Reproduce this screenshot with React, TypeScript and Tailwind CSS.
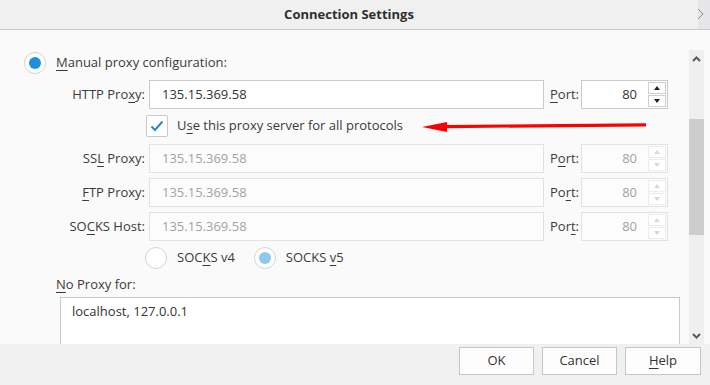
import React from 'react';

const U = ({ children }: { children: React.ReactNode }) => (
  <span className="underline decoration-1 underline-offset-[3px]">{children}</span>
);

function Radio({ checked, disabled }: { checked?: boolean; disabled?: boolean }) {
  return (
    <div className="w-[22px] h-[22px] rounded-full border border-[#d4d4d4] bg-white flex items-center justify-center shrink-0">
      {checked && (
        <div className={`w-[12px] h-[12px] rounded-full ${disabled ? 'bg-[#8ec8ec]' : 'bg-[#1f8fdc]'}`} />
      )}
    </div>
  );
}

function Spinner({ disabled }: { disabled?: boolean }) {
  const border = disabled ? 'border-[#ececec]' : 'border-[#cfcfcf]';
  const fill = disabled ? '#d8d8d8' : '#222';
  return (
    <div className="flex flex-col gap-[1px] py-[1px] pr-[1px]">
      <div className={`w-[18px] h-[12px] border ${border} bg-white flex items-center justify-center`}>
        <svg width="6" height="4" viewBox="0 0 6 4">
          <polygon points="3,0 6,4 0,4" fill={fill} />
        </svg>
      </div>
      <div className={`w-[18px] h-[12px] border ${border} bg-white flex items-center justify-center`}>
        <svg width="6" height="4" viewBox="0 0 6 4">
          <polygon points="0,0 6,0 3,4" fill={fill} />
        </svg>
      </div>
    </div>
  );
}

function ProxyRow({
  label,
  port,
  disabled,
}: {
  label: React.ReactNode;
  port: React.ReactNode;
  disabled?: boolean;
}) {
  const border = disabled ? 'border-[#e2e2e2]' : 'border-[#c9c9c9]';
  const text = disabled ? 'text-[#a3a3a3]' : 'text-[#333]';
  const bg = disabled ? 'bg-[#fcfcfc]' : 'bg-white';
  return (
    <div className="flex items-center h-[29px]">
      <div className="w-[121px] text-right">{label}</div>
      <div className={`ml-[4px] w-[395px] h-full border ${border} ${bg} ${text} pl-[12px] flex items-center`}>
        135.15.369.58
      </div>
      <div className="ml-[6px] w-[31px]">{port}</div>
      <div className={`w-[87px] h-full border ${border} ${bg} ${text} flex items-center justify-end`}>
        <span className="mr-[11px]">80</span>
        <Spinner disabled={disabled} />
      </div>
    </div>
  );
}

export default function App() {
  return (
    <div className="w-[710px] h-[385px] flex flex-col bg-[#fafafa] font-['Open_Sans',sans-serif] text-[13px] text-[#3a3a3a] overflow-hidden">
      <div className="h-[30px] shrink-0 flex bg-[#f0f0f0] border-b border-[#c9c9c9]">
        <div className="flex-1 flex items-center justify-center font-bold text-[#2f2f2f]">Connection Settings</div>
        <div className="w-[12px] bg-[#e6e6ea] flex items-center">
          <svg width="12" height="30" viewBox="0 0 12 30">
            <path d="M0 9 L5 14 M5 14 L0 19" stroke="#8a8a8a" strokeWidth="1" fill="none" />
          </svg>
        </div>
      </div>

      <div className="flex-1 flex min-h-0">
        <div className="flex-1 relative overflow-hidden pl-[24px] pt-[22px]">
          <div className="flex items-center h-[22px]">
            <Radio checked />
            <span className="ml-[10px]">
              <U>M</U>anual proxy configuration:
            </span>
          </div>

          <div className="mt-[6px]">
            <ProxyRow
              label={<>HTTP Pro<U>x</U>y:</>}
              port={<><U>P</U>ort:</>}
            />
          </div>

          <div className="mt-[6px] flex items-center h-[22px] ml-[122px]">
            <div className="w-[22px] h-[22px] border border-[#c9c9c9] bg-white rounded-[2px] flex items-center justify-center">
              <svg width="14" height="12" viewBox="0 0 14 12">
                <path d="M1.5 6.5 L5 10 L12.5 1.5" fill="none" stroke="#2a88d2" strokeWidth="2" />
              </svg>
            </div>
            <span className="ml-[9px]">
              U<U>s</U>e this proxy server for all protocols
            </span>
          </div>

          <div className="mt-[7px] flex flex-col gap-[5px]">
            <ProxyRow disabled label={<>SS<U>L</U> Proxy:</>} port={<>P<U>o</U>rt:</>} />
            <ProxyRow disabled label={<><U>F</U>TP Proxy:</>} port={<>Po<U>r</U>t:</>} />
            <ProxyRow disabled label={<>SO<U>C</U>KS Host:</>} port={<>Por<U>t</U>:</>} />
          </div>

          <div className="mt-[5px] flex items-center h-[23px] ml-[121px]">
            <Radio />
            <span className="ml-[10px]">
              SOC<U>K</U>S v4
            </span>
            <div className="ml-[19px]">
              <Radio checked disabled />
            </div>
            <span className="ml-[10px]">
              SOCKS <U>v</U>5
            </span>
          </div>

          <div className="mt-[6px] ml-[32px] h-[18px] leading-[18px]">
            <U>N</U>o Proxy for:
          </div>
          <div className="mt-[4px] ml-[36px] w-[620px] h-[70px] border border-[#c9c9c9] bg-white pl-[11px] pt-[4px] text-[#333]">
            localhost, 127.0.0.1
          </div>

          <svg className="absolute left-0 top-0 pointer-events-none" width="689" height="314">
            <line x1="444" y1="96.6" x2="646" y2="94.8" stroke="#ff0000" strokeWidth="3.2" />
            <polygon points="422,97 447,92 447,102" fill="#ff0000" />
          </svg>
        </div>

        <div className="w-[15px] mt-[20px] bg-[#efefef] flex flex-col">
          <div className="h-[17px] flex items-center justify-center">
            <svg width="9" height="6" viewBox="0 0 9 6">
              <path d="M1 5 L4.5 1.5 L8 5" fill="none" stroke="#5a5a5a" strokeWidth="2" />
            </svg>
          </div>
          <div className="h-[52px]" />
          <div className="h-[116px] bg-[#cdcdcd]" />
          <div className="flex-1" />
          <div className="h-[17px] flex items-center justify-center">
            <svg width="9" height="6" viewBox="0 0 9 6">
              <path d="M1 1 L4.5 4.5 L8 1" fill="none" stroke="#5a5a5a" strokeWidth="2" />
            </svg>
          </div>
        </div>
        <div className="w-[6px]" />
      </div>

      <div className="h-[41px] shrink-0 bg-[#f0f0f0] flex justify-end items-start pt-[3px] pr-[9px] gap-[8px]">
        <button className="w-[75px] h-[28px] border border-[#c6c6c6] bg-[#fdfdfd] text-[#333]">OK</button>
        <button className="w-[75px] h-[28px] border border-[#c6c6c6] bg-[#fdfdfd] text-[#333]">Cancel</button>
        <button className="w-[76px] h-[28px] border border-[#c6c6c6] bg-[#fdfdfd] text-[#333]">
          <U>H</U>elp
        </button>
      </div>
    </div>
  );
}
